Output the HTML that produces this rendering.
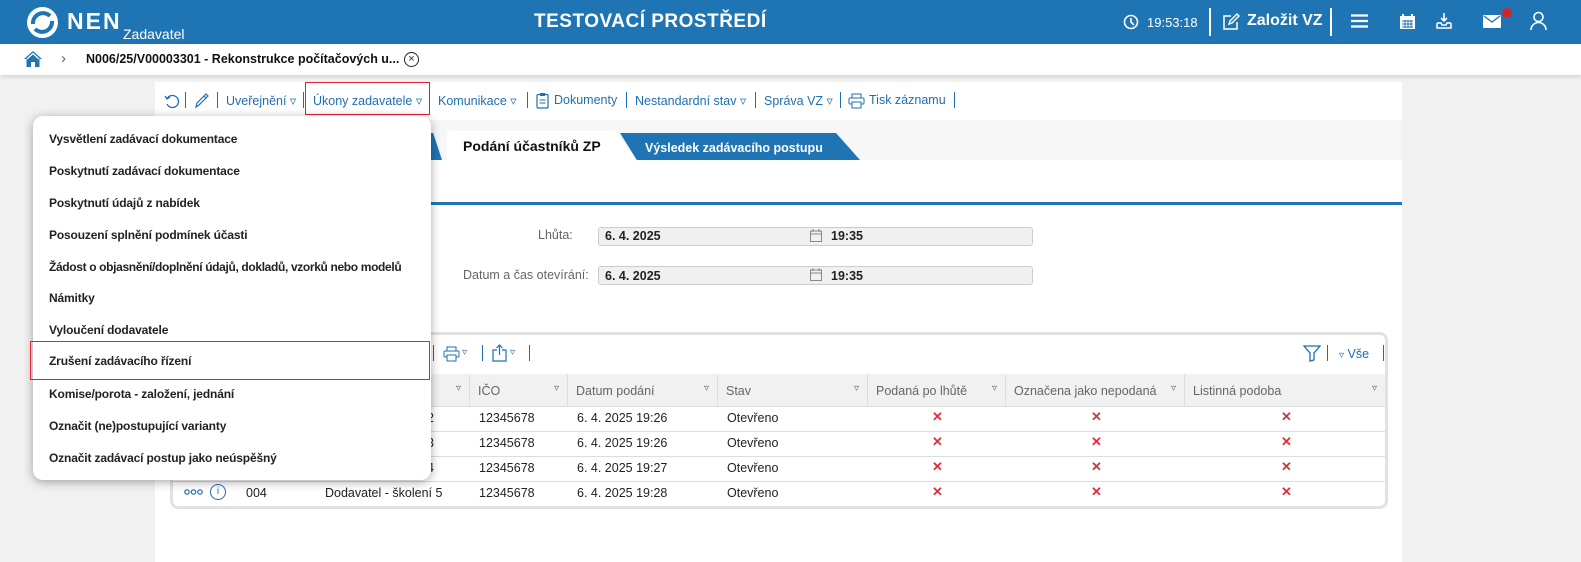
<!DOCTYPE html>
<html><head><meta charset="utf-8">
<style>
*{box-sizing:border-box;margin:0;padding:0}
body{width:1581px;height:562px;overflow:hidden;background:#f1f1f1;font-family:"Liberation Sans",Arial,sans-serif;position:relative;font-size:13px;color:#222}
.a{position:absolute;white-space:nowrap}
#hdr{left:0;top:0;width:1581px;height:44px;background:#1f75b3;color:#fff}
#bc{left:0;top:44px;width:1581px;height:31px;background:#fff;box-shadow:0 2px 4px rgba(0,0,0,.12)}
#panel{left:155px;top:82px;width:1247px;height:480px;background:#fff}
.tb{color:#1f6fb0;font-size:12.5px;top:93px}
.sep{width:1px;height:16px;background:#1f6fb0;top:92px}
.menu{left:33px;top:116px;width:398px;height:364px;background:#fff;border-radius:10px;box-shadow:0 2px 10px rgba(0,0,0,.35);}
.mi{position:absolute;left:16px;font-size:12px;font-weight:bold;color:#222;white-space:nowrap;letter-spacing:-.15px}
.th{top:374px;height:32px;background:#f1f1f1;border-right:1px solid #ddd;color:#666;font-size:12.5px;padding:10px 0 0 8px}
.th b{position:absolute;right:8px;top:9px;font-weight:normal;font-size:10px;color:#666}
.td{font-size:12.5px;color:#222}
.x{color:#d8323c;font-weight:bold;font-size:13px}
.hl{height:1px;background:#ddd;left:172px;width:1213px}
</style></head><body>
<div id="hdr" class="a">
 <svg class="a" style="left:26px;top:6px" width="33" height="33" viewBox="0 0 33 33"><circle cx="16.5" cy="16.5" r="15.5" fill="#fff"/><path d="M7 18a10 10 0 0 1 17-8" stroke="#1f75b3" stroke-width="4" fill="none"/><path d="M26 15a10 10 0 0 1-17 8" stroke="#1f75b3" stroke-width="4" fill="none"/></svg>
 <div class="a" style="left:67px;top:8px;font-size:23px;font-weight:bold;letter-spacing:2px">NEN</div>
 <div class="a" style="left:123px;top:26px;font-size:14px">Zadavatel</div>
 <div class="a" style="left:534px;top:11px;font-size:19px;font-weight:bold;letter-spacing:.5px">TESTOVACÍ PROSTŘEDÍ</div>
 <svg class="a" style="left:1123px;top:14px" width="16" height="16"><circle cx="8" cy="8" r="6.5" stroke="#fff" stroke-width="1.6" fill="none"/><path d="M8 4v4l3 3" stroke="#fff" stroke-width="1.6" fill="none"/></svg>
 <div class="a" style="left:1147px;top:15px;font-size:13px">19:53:18</div>
 <div class="a" style="left:1209px;top:8px;width:2px;height:28px;background:#fff"></div>
 <svg class="a" style="left:1222px;top:13px" width="18" height="18"><path d="M9 3H2v13h13V9" stroke="#fff" stroke-width="1.5" fill="none"/><path d="M7 11l1-3 7-7 2 2-7 7z" stroke="#fff" stroke-width="1.4" fill="none"/></svg>
 <div class="a" style="left:1247px;top:12px;font-size:16px;font-weight:bold">Založit VZ</div>
 <div class="a" style="left:1330px;top:8px;width:2px;height:28px;background:#fff"></div>
 <svg class="a" style="left:1351px;top:14px" width="17" height="14"><path d="M0 1.5h17M0 7h17M0 12.5h17" stroke="#fff" stroke-width="2.2"/></svg>
 <svg class="a" style="left:1399px;top:13px" width="17" height="17"><rect x="1" y="3" width="15" height="13" fill="#fff"/><path d="M4 1v3M13 1v3" stroke="#fff" stroke-width="2"/><path d="M3 8h11M3 11h11M3 14h11M6 7v8M9 7v8M12 7v8" stroke="#1f75b3" stroke-width=".9"/></svg>
 <svg class="a" style="left:1436px;top:12px" width="16" height="18"><path d="M8 1v8M5 6l3 3 3-3" stroke="#fff" stroke-width="1.6" fill="none"/><path d="M1 11v5h14v-5M1 11h4l1 2h4l1-2h4" stroke="#fff" stroke-width="1.5" fill="none"/></svg>
 <svg class="a" style="left:1483px;top:15px" width="18" height="13"><rect width="18" height="13" rx="1" fill="#fff"/><path d="M1 1l8 6 8-6" stroke="#1f75b3" stroke-width="1.3" fill="none"/></svg>
 <div class="a" style="left:1502px;top:8px;width:10px;height:10px;border-radius:50%;background:#d0252d"></div>
 <svg class="a" style="left:1530px;top:11px" width="17" height="20"><circle cx="8.5" cy="6" r="4.5" stroke="#fff" stroke-width="1.6" fill="none"/><path d="M1 19a7.5 7.5 0 0 1 15 0" stroke="#fff" stroke-width="1.6" fill="none"/></svg>
</div>
<div id="bc" class="a">
 <svg class="a" style="left:24px;top:7px" width="18" height="16"><path d="M9 0L0 8h2.5v8h4.5v-5h4v5h4.5V8H18z" fill="#1f75b3"/><path d="M3 8L9 2.5 15 8" stroke="#fff" stroke-width="1.2" fill="none"/></svg>
 <div class="a" style="left:61px;top:6px;color:#666;font-size:15px">&#x203A;</div>
 <div class="a" style="left:86px;top:8px;font-size:12.5px;font-weight:bold;color:#111">N006/25/V00003301 - Rekonstrukce počítačových u...</div>
 <div class="a" style="left:404px;top:8px;width:15px;height:15px;border:1.3px solid #222;border-radius:50%;font-size:11px;text-align:center;line-height:12px">×</div>
</div>
<div id="panel" class="a"></div>
<!-- toolbar -->
<svg class="a" style="left:164px;top:93px" width="16" height="16"><path d="M3 6a6 6 0 1 1 0 5" stroke="#1f6fb0" stroke-width="1.3" fill="none"/><path d="M1 3l2 3 3-2" stroke="#1f6fb0" stroke-width="1.3" fill="none"/></svg>
<div class="a sep" style="left:185px"></div>
<svg class="a" style="left:194px;top:92px" width="16" height="17"><path d="M2 15l1-4 9-9 2 2-9 9z M10 4l2 2" stroke="#1f6fb0" stroke-width="1.2" fill="none"/></svg>
<div class="a sep" style="left:217px"></div>
<div class="a tb" style="left:226px">Uveřejnění ▿</div>
<div class="a sep" style="left:303px"></div>
<div class="a" style="left:305px;top:82px;width:125px;height:33px;border:1px solid #e0242d"></div>
<div class="a tb" style="left:313px">Úkony zadavatele ▿</div>
<div class="a tb" style="left:438px">Komunikace ▿</div>
<div class="a sep" style="left:527px"></div>
<svg class="a" style="left:536px;top:92px" width="13" height="17"><rect x="1" y="2.5" width="11" height="13.5" rx="1" stroke="#1f6fb0" stroke-width="1.2" fill="none"/><rect x="4" y="1" width="5" height="3" fill="#1f6fb0"/><path d="M3.5 8h6M3.5 11h6" stroke="#1f6fb0"/></svg>
<div class="a tb" style="left:554px">Dokumenty</div>
<div class="a sep" style="left:626px"></div>
<div class="a tb" style="left:635px">Nestandardní stav ▿</div>
<div class="a sep" style="left:755px"></div>
<div class="a tb" style="left:764px">Správa VZ ▿</div>
<div class="a sep" style="left:840px"></div>
<svg class="a" style="left:848px;top:93px" width="17" height="16"><rect x="4" y="1" width="9" height="4" stroke="#1f6fb0" fill="none"/><rect x="1" y="5" width="15" height="6" rx="1" stroke="#1f6fb0" fill="none"/><rect x="4" y="9" width="9" height="6" stroke="#1f6fb0" fill="#fff"/></svg>
<div class="a tb" style="left:869px">Tisk záznamu</div>
<div class="a sep" style="left:954px"></div>
<div class="a" style="left:155px;top:120px;width:1247px;height:40px;background:#f7f7f7"></div>
<!-- tabs -->
<div class="a" style="left:420px;top:133px;width:22px;height:27px;background:#1f75b3;clip-path:polygon(0 0,60% 0,100% 100%,0 100%)"></div>
<div class="a" style="left:447px;top:131px;width:190px;height:30px;background:#fff;clip-path:polygon(0 0,88% 0,100% 100%,0 100%)"></div>
<div class="a" style="left:463px;top:138px;font-size:14px;font-weight:bold;color:#111">Podání účastníků ZP</div>
<div class="a" style="left:620px;top:133px;width:240px;height:27px;background:#1f75b3;clip-path:polygon(0 0,90% 0,100% 100%,7% 100%)"></div>
<div class="a" style="left:645px;top:141px;font-size:12.5px;font-weight:bold;color:#fff">Výsledek zadávacího postupu</div>
<div class="a" style="left:155px;top:202px;width:1247px;height:3px;background:#1f75b3"></div>
<!-- fields -->
<div class="a" style="left:538px;top:228px;color:#666;font-size:12.5px">Lhůta:</div>
<div class="a" style="left:463px;top:268px;color:#666;font-size:12.5px">Datum a čas otevírání:</div>
<div class="a" style="left:598px;top:227px;width:435px;height:19px;background:#f0f0f0;border:1px solid #ccc;border-radius:3px"></div>
<div class="a" style="left:598px;top:266px;width:435px;height:19px;background:#f0f0f0;border:1px solid #ccc;border-radius:3px"></div>
<div class="a" style="left:605px;top:229px;font-size:12.5px;font-weight:bold">6. 4. 2025</div>
<div class="a" style="left:605px;top:269px;font-size:12.5px;font-weight:bold">6. 4. 2025</div>
<svg class="a" style="left:810px;top:229px" width="12" height="13"><rect x=".5" y="2" width="11" height="10.5" stroke="#888" fill="none"/><path d="M.5 5h11M3 0v3M9 0v3" stroke="#888"/></svg>
<svg class="a" style="left:810px;top:268px" width="12" height="13"><rect x=".5" y="2" width="11" height="10.5" stroke="#888" fill="none"/><path d="M.5 5h11M3 0v3M9 0v3" stroke="#888"/></svg>
<div class="a" style="left:831px;top:229px;font-size:12.5px;font-weight:bold">19:35</div>
<div class="a" style="left:831px;top:269px;font-size:12.5px;font-weight:bold">19:35</div>
<!-- table -->
<div class="a" style="left:170px;top:332px;width:1218px;height:177px;border:3px solid #e2e2e2;border-radius:8px;background:#fff"></div>
<div class="a sep" style="left:433px;top:345px"></div>
<svg class="a" style="left:443px;top:346px" width="17" height="16"><rect x="4" y="1" width="9" height="4" stroke="#1f6fb0" fill="none"/><rect x="1" y="5" width="15" height="6" rx="1" stroke="#1f6fb0" fill="none"/><rect x="4" y="9" width="9" height="6" stroke="#1f6fb0" fill="#fff"/></svg>
<div class="a tb" style="left:462px;top:347px;font-size:10px">▿</div>
<div class="a sep" style="left:482px;top:345px"></div>
<svg class="a" style="left:492px;top:344px" width="15" height="18"><path d="M5 6H1v11h13V6h-4" stroke="#1f6fb0" stroke-width="1.2" fill="none"/><path d="M7.5 11V1M4.5 4l3-3 3 3" stroke="#1f6fb0" stroke-width="1.2" fill="none"/></svg>
<div class="a tb" style="left:510px;top:347px;font-size:10px">▿</div>
<div class="a sep" style="left:529px;top:345px"></div>
<svg class="a" style="left:1303px;top:345px" width="18" height="17"><path d="M1 1h16l-6 7v7l-4 1V8z" stroke="#1f6fb0" stroke-width="1.3" fill="none"/></svg>
<div class="a sep" style="left:1327px;top:345px"></div>
<div class="a tb" style="left:1339px;top:347px;font-size:12.5px"><span style="font-size:10px">▿</span> Vše</div>
<div class="a sep" style="left:1383px;top:345px"></div>
<div class="a th" style="left:173px;width:297px"><b>▿</b></div>
<div class="a th" style="left:470px;width:98px">IČO<b>▿</b></div>
<div class="a th" style="left:568px;width:150px">Datum podání<b>▿</b></div>
<div class="a th" style="left:718px;width:150px">Stav<b>▿</b></div>
<div class="a th" style="left:868px;width:138px">Podaná po lhůtě<b>▿</b></div>
<div class="a th" style="left:1006px;width:179px">Označena jako nepodaná<b>▿</b></div>
<div class="a th" style="left:1185px;width:200px;border-right:none">Listinná podoba<b>▿</b></div>
<div class="a hl" style="top:406px"></div>
<div class="a hl" style="top:431px"></div>
<div class="a hl" style="top:456px"></div>
<div class="a hl" style="top:481px"></div>

<div class="a td" style="left:420px;top:411px">í 2</div>
<div class="a td" style="left:420px;top:436px">í 3</div>
<div class="a td" style="left:420px;top:461px">í 4</div>
<svg class="a" style="left:184px;top:489px" width="19" height="6"><circle cx="3" cy="3" r="2.2" stroke="#1f6fb0" stroke-width="1.2" fill="none"/><circle cx="9.5" cy="3" r="2.2" stroke="#1f6fb0" stroke-width="1.2" fill="none"/><circle cx="16" cy="3" r="2.2" stroke="#1f6fb0" stroke-width="1.2" fill="none"/></svg>
<div class="a" style="left:210px;top:484px;width:16px;height:16px;border:1.3px solid #1f6fb0;border-radius:50%;color:#1f6fb0;font-size:10px;text-align:center;line-height:14px">i</div>
<div class="a td" style="left:246px;top:486px">004</div>
<div class="a td" style="left:325px;top:486px">Dodavatel - školení 5</div>

<div class="a td" style="left:479px;top:411px">12345678</div>
<div class="a td" style="left:479px;top:436px">12345678</div>
<div class="a td" style="left:479px;top:461px">12345678</div>
<div class="a td" style="left:479px;top:486px">12345678</div>
<div class="a td" style="left:577px;top:411px">6. 4. 2025 19:26</div>
<div class="a td" style="left:577px;top:436px">6. 4. 2025 19:26</div>
<div class="a td" style="left:577px;top:461px">6. 4. 2025 19:27</div>
<div class="a td" style="left:577px;top:486px">6. 4. 2025 19:28</div>
<div class="a td" style="left:727px;top:411px">Otevřeno</div>
<div class="a td" style="left:727px;top:436px">Otevřeno</div>
<div class="a td" style="left:727px;top:461px">Otevřeno</div>
<div class="a td" style="left:727px;top:486px">Otevřeno</div>
<div class="a x" style="left:932px;top:409px">✕</div><div class="a x" style="left:1091px;top:409px">✕</div><div class="a x" style="left:1281px;top:409px">✕</div>
<div class="a x" style="left:932px;top:434px">✕</div><div class="a x" style="left:1091px;top:434px">✕</div><div class="a x" style="left:1281px;top:434px">✕</div>
<div class="a x" style="left:932px;top:459px">✕</div><div class="a x" style="left:1091px;top:459px">✕</div><div class="a x" style="left:1281px;top:459px">✕</div>
<div class="a x" style="left:932px;top:484px">✕</div><div class="a x" style="left:1091px;top:484px">✕</div><div class="a x" style="left:1281px;top:484px">✕</div>
<!-- menu -->
<div class="a menu">
 <div class="mi" style="top:16px">Vysvětlení zadávací dokumentace</div>
 <div class="mi" style="top:48px">Poskytnutí zadávací dokumentace</div>
 <div class="mi" style="top:80px">Poskytnutí údajů z nabídek</div>
 <div class="mi" style="top:112px">Posouzení splnění podmínek účasti</div>
 <div class="mi" style="top:144px;letter-spacing:-.35px">Žádost o objasnění/doplnění údajů, dokladů, vzorků nebo modelů</div>
 <div class="mi" style="top:175px">Námitky</div>
 <div class="mi" style="top:207px">Vyloučení dodavatele</div>
 <div style="position:absolute;left:-3px;top:225px;width:400px;height:39px;border:1px solid #e0242d"></div>
 <div class="mi" style="top:238px">Zrušení zadávacího řízení</div>
 <div class="mi" style="top:271px">Komise/porota - založení, jednání</div>
 <div class="mi" style="top:303px">Označit (ne)postupující varianty</div>
 <div class="mi" style="top:335px">Označit zadávací postup jako neúspěšný</div>
</div>
</body></html>
